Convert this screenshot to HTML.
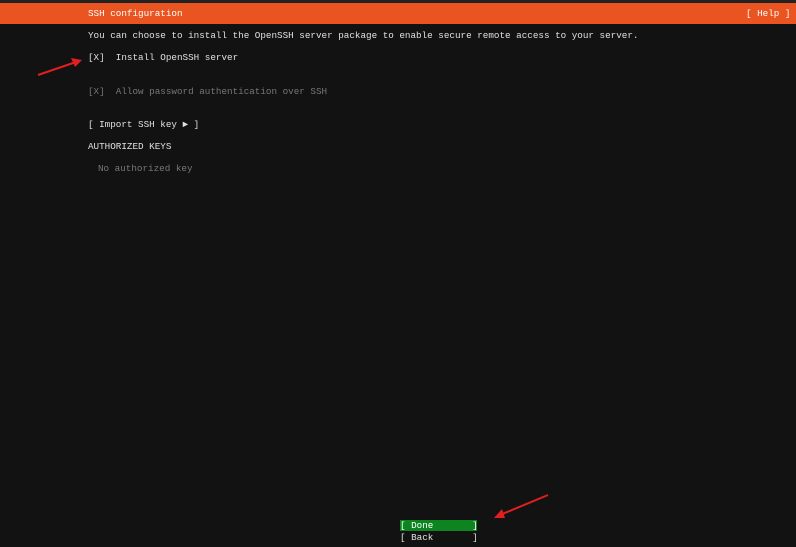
<!DOCTYPE html>
<html><head><style>
body{margin:0;width:796px;height:547px;background:#121212;overflow:hidden;position:relative;font-family:"Liberation Mono",monospace;font-size:9.27px;color:#e0e0e0}
.t{position:absolute;white-space:pre;line-height:11px}
.g{color:#777}
</style></head><body>
<div style="position:absolute;left:0;top:0;width:796px;height:3px;background:#222"></div>
<div style="position:absolute;left:0;top:3px;width:796px;height:21px;background:#e95420"></div>
<div class="t" style="left:88px;top:8px;color:#fff">SSH configuration</div>
<div class="t" style="left:746px;top:8px;color:#fff">[ Help ]</div>
<div class="t" style="left:88px;top:30px">You can choose to install the OpenSSH server package to enable secure remote access to your server.</div>
<div class="t" style="left:88px;top:52px">[X]  Install OpenSSH server</div>
<div class="t g" style="left:88px;top:86px">[X]  Allow password authentication over SSH</div>
<div class="t" style="left:88px;top:119px">[ Import SSH key ► ]</div>
<div class="t" style="left:88px;top:141px">AUTHORIZED KEYS</div>
<div class="t g" style="left:98px;top:163px">No authorized key</div>
<div style="position:absolute;left:400px;top:520px;width:77px;height:11px;background:#0e8420"></div>
<div class="t" style="left:400px;top:520px;color:#fff">[ Done       ]</div>
<div class="t" style="left:400px;top:532px">[ Back       ]</div>
<svg style="position:absolute;left:0;top:0" width="796" height="547">
<line x1="38" y1="75" x2="76" y2="62" stroke="#e02020" stroke-width="2"/>
<polygon points="82,60 71,58 75,67" fill="#e02020"/>
<line x1="548" y1="495" x2="500" y2="515" stroke="#e02020" stroke-width="2"/>
<polygon points="494,518 502,509 505,518" fill="#e02020"/>
</svg>
</body></html>
